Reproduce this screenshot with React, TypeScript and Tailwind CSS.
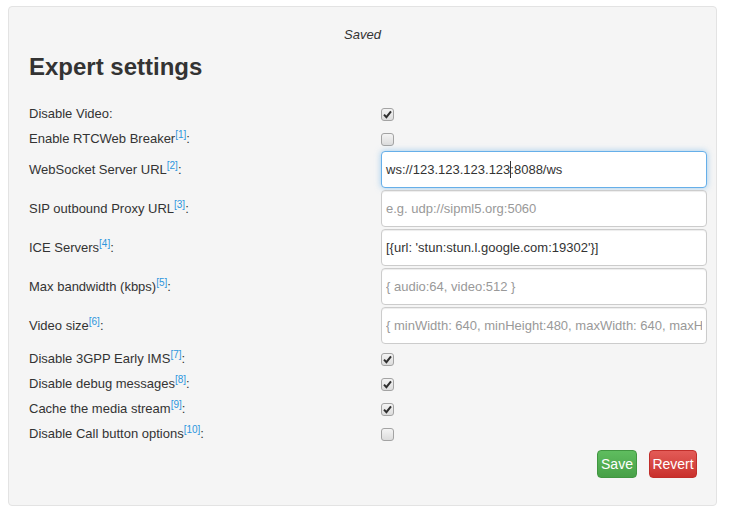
import React from "react"

type Row =
  | { kind: "check"; label: string; note?: string; checked: boolean }
  | { kind: "text"; label: string; note?: string; value?: string; placeholder?: string; focused?: boolean }

const rows: Row[] = [
  { kind: "check", label: "Disable Video", checked: true },
  { kind: "check", label: "Enable RTCWeb Breaker", note: "1", checked: false },
  { kind: "text", label: "WebSocket Server URL", note: "2", value: "ws://123.123.123.123:8088/ws", focused: true },
  { kind: "text", label: "SIP outbound Proxy URL", note: "3", placeholder: "e.g. udp://sipml5.org:5060" },
  { kind: "text", label: "ICE Servers", note: "4", value: "[{url: 'stun:stun.l.google.com:19302'}]" },
  { kind: "text", label: "Max bandwidth (kbps)", note: "5", placeholder: "{ audio:64, video:512 }" },
  {
    kind: "text",
    label: "Video size",
    note: "6",
    placeholder: "{ minWidth: 640, minHeight:480, maxWidth: 640, maxHeight:480 }",
  },
  { kind: "check", label: "Disable 3GPP Early IMS", note: "7", checked: true },
  { kind: "check", label: "Disable debug messages", note: "8", checked: true },
  { kind: "check", label: "Cache the media stream", note: "9", checked: true },
  { kind: "check", label: "Disable Call button options", note: "10", checked: false },
]

function Label({ text, note }: { text: string; note?: string }) {
  return (
    <span className="whitespace-nowrap">
      {text}
      {note && (
        <sup className="text-[10px] leading-none text-[#2d96dd] relative -top-[5px]">[{note}]</sup>
      )}
      :
    </span>
  )
}

function Checkbox({ checked }: { checked: boolean }) {
  return (
    <span className="inline-flex items-center justify-center w-[13px] h-[13px] rounded-[3px] border border-[#a3a3a3] bg-gradient-to-b from-[#f4f4f4] to-[#dcdcdc]">
      {checked && (
        <svg width="9" height="9" viewBox="0 0 9 9">
          <path d="M1 4.6 L3.4 7.2 L8 1.4" fill="none" stroke="#2f2f2f" strokeWidth="2" strokeLinejoin="miter" />
        </svg>
      )}
    </span>
  )
}

export default function App() {
  return (
    <div className="min-h-[524px] bg-white pt-[6px] pl-[8px] font-['Liberation_Sans',Arial,sans-serif] text-[13px] text-[#333]">
      <div className="w-[709px] h-[500px] bg-[#f5f5f5] border border-[#e3e3e3] rounded-[4px] pl-[20px] pr-[9px] pt-[19px]">
        <div className="text-center italic leading-[18px] pr-[11px]">Saved</div>
        <h1 className="mt-[10px] text-[24px] leading-[26px] font-bold">Expert settings</h1>

        <div className="mt-[21px] grid grid-cols-[352px_326px]">
          {rows.map((r, i) =>
            r.kind === "check" ? (
              <React.Fragment key={i}>
                <div className="h-[25px] flex items-center leading-[25px]">
                  <Label text={r.label} note={r.note} />
                </div>
                <div className="h-[25px] flex items-center pt-[2px]">
                  <Checkbox checked={r.checked} />
                </div>
              </React.Fragment>
            ) : (
              <React.Fragment key={i}>
                <div className="h-[39px] flex items-center pb-[2px]">
                  <Label text={r.label} note={r.note} />
                </div>
                <div className="h-[39px]">
                  {r.focused ? (
                    <div className="h-[37px] flex items-center bg-white border border-[#66afe9] rounded-[4px] px-[4px] shadow-[0_0_6px_rgba(102,175,233,0.6)] whitespace-nowrap overflow-hidden">
                      ws://123.123.123.123
                      <span className="inline-block w-0 h-[17px] border-l border-[#333] -mr-px" />
                      :8088/ws
                    </div>
                  ) : (
                    <input
                      readOnly
                      defaultValue={r.value}
                      placeholder={r.placeholder}
                      className="w-full h-[37px] bg-white border border-[#cccccc] rounded-[4px] px-[4px] text-[13px] text-[#333] placeholder:text-[#999] outline-none shadow-[inset_0_1px_1px_rgba(0,0,0,0.075)]"
                    />
                  )}
                </div>
              </React.Fragment>
            )
          )}
        </div>

        <div className="mt-[4px] flex justify-end gap-[12px] pr-[10px]">
          <button className="w-[40px] h-[28px] rounded-[4px] border border-[#419641] bg-gradient-to-b from-[#5fbd5f] to-[#47a047] text-white text-[14px]">
            Save
          </button>
          <button className="w-[48px] h-[28px] rounded-[4px] border border-[#c12e2a] bg-gradient-to-b from-[#e35b57] to-[#c9302c] text-white text-[14px]">
            Revert
          </button>
        </div>
      </div>
    </div>
  )
}
